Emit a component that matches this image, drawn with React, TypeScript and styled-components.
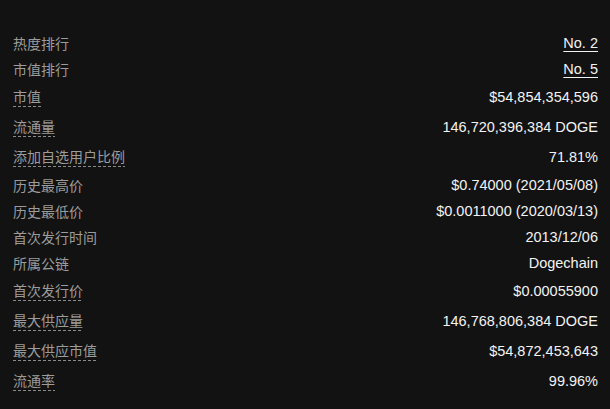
import React from 'react';
import styled, { createGlobalStyle } from 'styled-components';

const GlobalStyle = createGlobalStyle`
  html, body {
    margin: 0;
    padding: 0;
    background: #121212;
  }
`;

const Panel = styled.div`
  box-sizing: border-box;
  width: 610px;
  height: 409px;
  padding: 30px 12px 0 13px;
  background: #121212;
  font-family: 'Liberation Sans', 'Noto Sans CJK SC', sans-serif;
  font-size: 14px;
`;

const Row = styled.div<{ $tall?: boolean }>`
  display: flex;
  align-items: center;
  justify-content: space-between;
  height: ${(p) => (p.$tall ? 30 : 26)}px;
`;

const Label = styled.span<{ $dashed?: boolean }>`
  color: #9c9c9c;
  font-family: 'Noto Sans CJK SC', sans-serif;
  line-height: 18px;
  padding-bottom: ${(p) => (p.$dashed ? 2 : 0)}px;
  background-image: ${(p) =>
    p.$dashed
      ? 'repeating-linear-gradient(to right, #8a8a8a 0 3px, transparent 3px 5px)'
      : 'none'};
  background-size: 100% 1px;
  background-position: left bottom;
  background-repeat: no-repeat;
`;

const Value = styled.span<{ $link?: boolean }>`
  color: #f2f2f2;
  font-size: 14.5px;
  text-decoration: ${(p) => (p.$link ? 'underline' : 'none')};
  text-underline-offset: 3px;
`;

type Item = { label: string; value: string; dashed?: boolean; link?: boolean };

const items: Item[] = [
  { label: '热度排行', value: 'No. 2', link: true },
  { label: '市值排行', value: 'No. 5', link: true },
  { label: '市值', value: '$54,854,354,596', dashed: true },
  { label: '流通量', value: '146,720,396,384 DOGE', dashed: true },
  { label: '添加自选用户比例', value: '71.81%', dashed: true },
  { label: '历史最高价', value: '$0.74000 (2021/05/08)' },
  { label: '历史最低价', value: '$0.0011000 (2020/03/13)' },
  { label: '首次发行时间', value: '2013/12/06' },
  { label: '所属公链', value: 'Dogechain' },
  { label: '首次发行价', value: '$0.00055900', dashed: true },
  { label: '最大供应量', value: '146,768,806,384 DOGE', dashed: true },
  { label: '最大供应市值', value: '$54,872,453,643', dashed: true },
  { label: '流通率', value: '99.96%', dashed: true },
];

export default function App() {
  return (
    <>
      <GlobalStyle />
      <Panel>
        {items.map((it) => (
          <Row key={it.label} $tall={it.dashed}>
            <Label $dashed={it.dashed}>{it.label}</Label>
            <Value $link={it.link}>{it.value}</Value>
          </Row>
        ))}
      </Panel>
    </>
  );
}
